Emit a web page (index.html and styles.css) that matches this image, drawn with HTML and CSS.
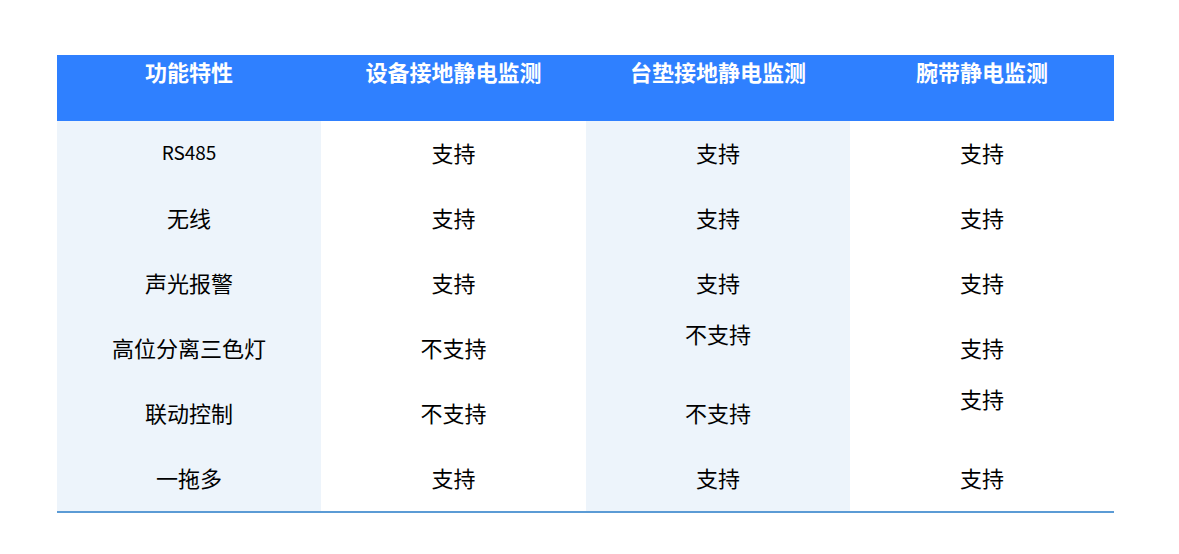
FILE: index.html
```html
<!DOCTYPE html>
<html lang="zh">
<head>
<meta charset="utf-8">
<link rel="stylesheet" href="styles.css">
</head>
<body>
<div class="page">
  <div class="table">
    <div class="row head">
      <div class="cell">功能特性</div>
      <div class="cell">设备接地静电监测</div>
      <div class="cell">台垫接地静电监测</div>
      <div class="cell">腕带静电监测</div>
    </div>
    <div class="row">
      <div class="cell alt latin">RS485</div>
      <div class="cell">支持</div>
      <div class="cell alt">支持</div>
      <div class="cell">支持</div>
    </div>
    <div class="row">
      <div class="cell alt">无线</div>
      <div class="cell">支持</div>
      <div class="cell alt">支持</div>
      <div class="cell">支持</div>
    </div>
    <div class="row">
      <div class="cell alt">声光报警</div>
      <div class="cell">支持</div>
      <div class="cell alt">支持</div>
      <div class="cell">支持</div>
    </div>
    <div class="row">
      <div class="cell alt">高位分离三色灯</div>
      <div class="cell">不支持</div>
      <div class="cell alt raised">不支持</div>
      <div class="cell">支持</div>
    </div>
    <div class="row">
      <div class="cell alt">联动控制</div>
      <div class="cell">不支持</div>
      <div class="cell alt">不支持</div>
      <div class="cell raised">支持</div>
    </div>
    <div class="row last">
      <div class="cell alt">一拖多</div>
      <div class="cell">支持</div>
      <div class="cell alt">支持</div>
      <div class="cell">支持</div>
    </div>
  </div>
</div>
</body>
</html>
```

FILE: styles.css
```css
html, body {
  margin: 0;
  padding: 0;
  background: #ffffff;
}
body {
  font-family: "Noto Sans CJK SC", "Noto Sans", sans-serif;
  color: #000000;
}
.page {
  padding: 55px 0 0 57px;
}
.table {
  width: 1057px;
  border-bottom: 2px solid #5b9bd5;
}
.row {
  display: grid;
  grid-template-columns: 264px 265px 264px 264px;
  height: 65px;
}
.cell {
  display: flex;
  align-items: center;
  justify-content: center;
  padding-bottom: 4px;
  font-size: 22px;
  line-height: 28px;
}
.cell.alt {
  background: #edf4fb;
}
.cell.latin {
  font-size: 19px;
}
.cell.raised {
  padding-bottom: 32px;
}
.head {
  height: 66px;
  background: #2f80ff;
}
.head .cell {
  align-items: flex-start;
  padding-top: 2px;
  padding-bottom: 0;
  color: #ffffff;
  font-weight: 700;
}
```
